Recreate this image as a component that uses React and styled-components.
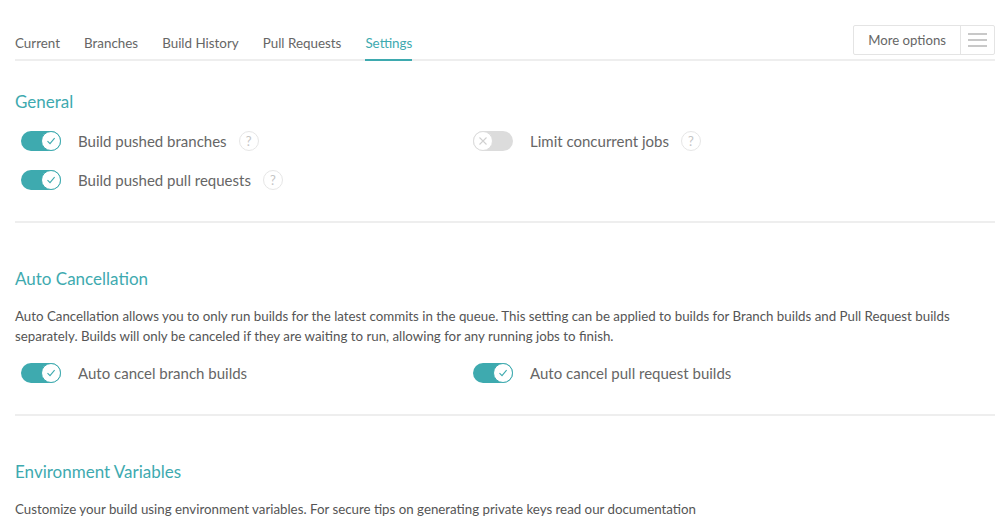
import React, { useState } from "react";
import styled, { createGlobalStyle } from "styled-components";

const Global = createGlobalStyle`
  body {
    margin: 0;
    background: #fff;
    font-family: Lato, "Noto Sans", sans-serif;
    color: #666;
  }
`;

const Page = styled.div`
  padding: 25px 10px 0 15px;
`;

const TopBar = styled.div`
  display: flex;
  align-items: flex-end;
  justify-content: space-between;
  border-bottom: 2px solid #eeeeee;
  height: 34px;
`;

const Tabs = styled.nav`
  display: flex;
  gap: 24px;
  height: 100%;
`;

const Tab = styled.a`
  display: flex;
  align-items: center;
  font-size: 13.4px;
  color: ${(p) => (p.$active ? "#3eaaaf" : "#666")};
  border-bottom: 2px solid ${(p) => (p.$active ? "#3eaaaf" : "transparent")};
  margin-bottom: -2px;
  padding-top: 2px;
  cursor: pointer;
`;

const OptionsButton = styled.div`
  display: flex;
  align-self: flex-start;
  height: 28px;
  border: 1px solid #e4e4e4;
  border-radius: 2px;
`;

const OptionsLabel = styled.span`
  display: flex;
  align-items: center;
  padding: 0 14px 0 14px;
  font-size: 13.2px;
  color: #666;
  border-right: 1px solid #e4e4e4;
`;

const Burger = styled.span`
  display: flex;
  flex-direction: column;
  justify-content: center;
  gap: 4px;
  width: 33px;
  align-items: center;
  span {
    display: block;
    width: 19px;
    height: 2px;
    background: #c8c8c8;
  }
`;

const Section = styled.section`
  padding: ${(p) => p.$top || "29px"} 0 ${(p) => p.$bottom || "22px"};
  border-bottom: ${(p) => (p.$last ? "none" : "2px solid #eeeeee")};
`;

const Heading = styled.h2`
  margin: 0 0 16px;
  font-size: 17px;
  font-weight: 400;
  color: #3eaaaf;
  line-height: 22px;
`;

const Text = styled.p`
  margin: 0 0 ${(p) => p.$gap || "0"};
  max-width: 960px;
  font-size: 13.3px;
  line-height: 20px;
  color: #555;
`;

const Grid = styled.div`
  display: grid;
  grid-template-columns: 452px 1fr;
  padding: 2px 0 0 6px;
`;

const Column = styled.div`
  display: flex;
  flex-direction: column;
  gap: 19px;
`;

const Row = styled.label`
  display: flex;
  align-items: center;
  height: 20px;
  font-size: 15px;
  color: #666;
  cursor: pointer;
`;

const Track = styled.span`
  position: relative;
  width: 40px;
  height: 20px;
  border-radius: 10px;
  background: ${(p) => (p.$on ? "#3eaaaf" : "#dcdcdc")};
  margin-right: 17px;
  flex-shrink: 0;
`;

const Knob = styled.span`
  position: absolute;
  top: 0;
  left: ${(p) => (p.$on ? "20px" : "0")};
  width: 20px;
  height: 20px;
  box-sizing: border-box;
  border-radius: 50%;
  background: #fff;
  border: 1.5px solid ${(p) => (p.$on ? "#3eaaaf" : "#dcdcdc")};
  display: flex;
  align-items: center;
  justify-content: center;
`;

const Help = styled.span`
  display: inline-flex;
  align-items: center;
  justify-content: center;
  width: 18px;
  height: 18px;
  border: 1px solid #e6e6e6;
  border-radius: 50%;
  margin-left: 12px;
  font-size: 13px;
  color: #c4c4c4;
`;

function Toggle({ on, label, help }) {
  const [state, setState] = useState(on);
  return (
    <Row onClick={() => setState(!state)}>
      <Track $on={state}>
        <Knob $on={state}>
          {state ? (
            <svg width="10" height="10" viewBox="0 0 10 10">
              <path d="M1.5 5.2 L4 7.6 L8.6 2.2" fill="none" stroke="#3eaaaf" strokeWidth="1.1" />
            </svg>
          ) : (
            <svg width="10" height="10" viewBox="0 0 10 10">
              <path d="M1.5 1.5 L8.5 8.5 M8.5 1.5 L1.5 8.5" fill="none" stroke="#d0d0d0" strokeWidth="1.1" />
            </svg>
          )}
        </Knob>
      </Track>
      {label}
      {help && <Help>?</Help>}
    </Row>
  );
}

export default function App() {
  const tabs = ["Current", "Branches", "Build History", "Pull Requests", "Settings"];
  return (
    <Page>
      <Global />
      <TopBar>
        <Tabs>
          {tabs.map((t) => (
            <Tab key={t} $active={t === "Settings"}>{t}</Tab>
          ))}
        </Tabs>
        <OptionsButton>
          <OptionsLabel>More options</OptionsLabel>
          <Burger><span /><span /><span /></Burger>
        </OptionsButton>
      </TopBar>

      <Section $top="30px" $bottom="31px">
        <Heading>General</Heading>
        <Grid>
          <Column>
            <Toggle on label="Build pushed branches" help />
            <Toggle on label="Build pushed pull requests" help />
          </Column>
          <Column>
            <Toggle on={false} label="Limit concurrent jobs" help />
          </Column>
        </Grid>
      </Section>

      <Section $top="45px" $bottom="31px">
        <Heading>Auto Cancellation</Heading>
        <Text $gap="15px">
          Auto Cancellation allows you to only run builds for the latest commits in the queue. This setting can be applied to builds for Branch builds and Pull Request builds separately. Builds will only be canceled if they are waiting to run, allowing for any running jobs to finish.
        </Text>
        <Grid>
          <Toggle on label="Auto cancel branch builds" />
          <Toggle on label="Auto cancel pull request builds" />
        </Grid>
      </Section>

      <Section $top="45px" $last>
        <Heading>Environment Variables</Heading>
        <Text>
          Customize your build using environment variables. For secure tips on generating private keys read our documentation
        </Text>
      </Section>
    </Page>
  );
}
